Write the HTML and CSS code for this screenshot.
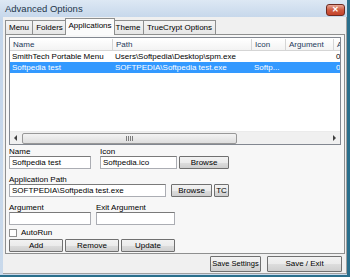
FILE: index.html
```html
<!DOCTYPE html>
<html lang="en">
<head>
    <meta charset="UTF-8">
    <title>Advanced Options</title>
    <link rel="stylesheet" href="styles.css">
</head>
<body>
    <div class="window">
        <!-- Title bar -->
        <div class="titlebar">
            <span class="title">Advanced Options</span>
            <span class="close">✕</span>
        </div>

        <div class="client">
            <!-- Tabs -->
            <div class="tabs">
                <span class="tab tab-menu">Menu</span>
                <span class="tab tab-folders">Folders</span>
                <span class="tab tab-apps active">Applications</span>
                <span class="tab tab-theme">Theme</span>
                <span class="tab tab-tc">TrueCrypt Options</span>
            </div>

            <div class="panel">
                <!-- Applications list -->
                <div class="list">
                    <div class="list-head">
                        <span>Name</span>
                        <span>Path</span>
                        <span>Icon</span>
                        <span>Argument</span>
                        <span>A</span>
                    </div>
                    <div class="list-row">
                        <span>SmithTech Portable Menu</span>
                        <span>Users\Softpedia\Desktop\spm.exe</span>
                        <span></span>
                        <span></span>
                        <span>0</span>
                    </div>
                    <div class="list-row selected">
                        <span>Softpedia test</span>
                        <span>SOFTPEDIA\Softpedia test.exe</span>
                        <span>Softp...</span>
                        <span></span>
                        <span>0</span>
                    </div>
                    <div class="list-fill"></div>
                    <div class="hscroll">
                        <span class="arrow left"></span>
                        <span class="track"><span class="thumb"><span class="grip"></span></span></span>
                        <span class="arrow right"></span>
                    </div>
                </div>

                <!-- Edit form -->
                <div class="form">
                    <div class="form-row">
                        <div class="field w-name">
                            <label>Name</label>
                            <div class="input">Softpedia test</div>
                        </div>
                        <div class="field w-icon">
                            <label>Icon</label>
                            <div class="input">Softpedia.ico</div>
                        </div>
                        <button class="btn btn-browse1">Browse</button>
                    </div>
                    <div class="form-row">
                        <div class="field w-path">
                            <label>Application Path</label>
                            <div class="input">SOFTPEDIA\Softpedia test.exe</div>
                        </div>
                        <button class="btn btn-browse2">Browse</button>
                        <button class="btn btn-tc">TC</button>
                    </div>
                    <div class="form-row">
                        <div class="field w-name">
                            <label>Argument</label>
                            <div class="input"></div>
                        </div>
                        <div class="field w-exit">
                            <label>Exit Argument</label>
                            <div class="input"></div>
                        </div>
                    </div>
                    <div class="check-row">
                        <span class="checkbox"></span>
                        <span>AutoRun</span>
                    </div>
                    <div class="action-row">
                        <button class="btn btn-action">Add</button>
                        <button class="btn btn-action">Remove</button>
                        <button class="btn btn-action">Update</button>
                    </div>
                </div>
            </div>

            <!-- Footer buttons -->
            <div class="footer">
                <button class="btn btn-save">Save Settings</button>
                <button class="btn btn-exit">Save / Exit</button>
            </div>
        </div>
    </div>
</body>
</html>
```

FILE: styles.css
```css
/* Base */
* {
    margin: 0;
    padding: 0;
    box-sizing: border-box;
    font-family: 'Liberation Sans', Arial, sans-serif;
}

body {
    width: 350px;
    height: 277px;
    overflow: hidden;
    background-color: #c9d8ea;
    font-size: 8px;
    color: #000;
}

/* Window frame */
.window {
    width: 350px;
    height: 277px;
    display: flex;
    flex-direction: column;
    background: linear-gradient(#dde8f4, #c3d5ea 20px, #c9d9eb);
    border-right: 3px solid #2a6f8c;
    border-bottom: 2px solid #2a6f8c;
}

.titlebar {
    height: 17px;
    display: flex;
    align-items: center;
    justify-content: space-between;
    padding: 0 2px 0 5px;
}

.title {
    font-size: 9.5px;
    color: #24364a;
}

.close {
    width: 19px;
    height: 12px;
    margin-top: 3px;
    border: 1px solid #6d2a20;
    border-radius: 3px;
    background: linear-gradient(#e7a898, #cf5a40 50%, #c4422a);
    color: white;
    font-size: 8px;
    font-weight: bold;
    line-height: 10px;
    text-align: center;
}

.client {
    flex: 1;
    margin: 0 0 1px 3px;
    background-color: #f0f0f0;
    border-right: 1px solid #a0a0a0;
    border-bottom: 1px solid #a0a0a0;
    padding: 1px 0 0 2px;
    display: flex;
    flex-direction: column;
}

/* Tabs */
.tabs {
    display: flex;
    height: 16px;
    align-items: flex-end;
    position: relative;
    z-index: 1;
}

.tab {
    height: 14px;
    line-height: 13px;
    text-align: center;
    border: 1px solid #8e8f8f;
    border-bottom: none;
    border-left: none;
    background: linear-gradient(#f4f4f4, #e6e6e6);
    color: #000;
}

.tab-menu { width: 28px; border-left: 1px solid #8e8f8f; }
.tab-folders { width: 34px; }
.tab-apps { width: 46px; }
.tab-theme { width: 31px; }
.tab-tc { width: 72px; }

.tab.active {
    height: 17px;
    margin-left: -2px;
    margin-right: -2px;
    width: 50px;
    border-left: 1px solid #8e8f8f;
    background: #fbfbfb;
    line-height: 14px;
    margin-bottom: -1px;
    position: relative;
}

.panel {
    width: 340px;
    border: 1px solid #8e8f8f;
    background-color: #f7f7f7;
    padding: 2px 3px 1px 3px;
}

/* List view */
.list {
    height: 108px;
    border: 1px solid #828790;
    background-color: white;
    display: flex;
    flex-direction: column;
    overflow: hidden;
}

.list-head,
.list-row {
    display: grid;
    grid-template-columns: 103px 139px 34px 48px 20px;
}

.list-head {
    height: 12px;
    margin-top: 1px;
    line-height: 11px;
    color: #1e395b;
}

.list-head span {
    padding-left: 3px;
    border-right: 1px solid #d5d5d5;
    border-bottom: 1px solid #d5d5d5;
    background: linear-gradient(#ffffff, #f3f3f3);
}

.list-row {
    height: 11px;
    line-height: 11px;
}

.list-row span {
    padding-left: 2px;
    white-space: nowrap;
    overflow: hidden;
}

.list-row.selected {
    background-color: #3399ff;
    color: white;
}

.list-fill {
    flex: 1;
}

.hscroll {
    height: 13px;
    display: flex;
    align-items: center;
    background-color: #f0f0f0;
    border-top: 1px solid #ebebeb;
}

.arrow {
    width: 12px;
    height: 12px;
    position: relative;
}

.arrow::after {
    content: '';
    position: absolute;
    top: 3px;
    border-top: 3px solid transparent;
    border-bottom: 3px solid transparent;
}

.arrow.left::after {
    left: 4px;
    border-right: 3px solid #404040;
}

.arrow.right::after {
    left: 5px;
    border-left: 3px solid #404040;
}

.track {
    flex: 1;
    height: 12px;
    display: flex;
    align-items: center;
}

.thumb {
    width: 215px;
    height: 11px;
    border: 1px solid #989898;
    border-radius: 2px;
    background: linear-gradient(#f3f3f3, #dedede);
    display: flex;
    align-items: center;
    justify-content: center;
}

.grip {
    width: 7px;
    height: 5px;
    background: repeating-linear-gradient(90deg, #7b7b7b 0 1px, transparent 1px 2px);
}

/* Form */
.form {
    display: flex;
    flex-direction: column;
}

.form-row {
    display: flex;
    align-items: flex-end;
}

.field label {
    display: block;
    height: 9px;
    line-height: 9px;
    margin-top: 2px;
    color: #000;
}

.form-row:nth-child(2) .field label,
.form-row:nth-child(3) .field label {
    margin-top: 6px;
}

.input {
    height: 13px;
    border: 1px solid #abadb3;
    border-top-color: #7a7a7a;
    background-color: white;
    padding-left: 2px;
    line-height: 11px;
    white-space: nowrap;
    overflow: hidden;
}

.w-name { width: 82px; }
.w-icon { width: 77px; margin-left: 9px; }
.w-path { width: 157px; }
.w-exit { width: 79px; margin-left: 5px; }

.btn {
    height: 13px;
    padding: 0;
    border: 1px solid #707070;
    border-radius: 1px;
    background: linear-gradient(#f2f2f2, #ebebeb 50%, #dddddd 51%, #cfcfcf);
    font-size: 8px;
    color: #000;
    line-height: 11px;
    white-space: nowrap;
}

.btn-browse1 { width: 50px; margin-left: 2px; }
.btn-browse2 { width: 41px; margin-left: 5px; }
.btn-tc { width: 15px; margin-left: 2px; }

.check-row {
    display: flex;
    align-items: center;
    gap: 4px;
    margin-top: 3px;
    height: 9px;
}

.checkbox {
    width: 8px;
    height: 8px;
    border: 1px solid #8f8f8f;
    background-color: white;
}

.action-row {
    display: flex;
    gap: 2px;
    margin-top: 2px;
}

.btn-action { width: 54px; }

/* Footer */
.footer {
    display: flex;
    justify-content: flex-end;
    gap: 6px;
    padding: 2px 4px 0 0;
}

.btn-save { width: 51px; height: 16px; line-height: 14px; font-size: 7.5px; }
.btn-exit { width: 75px; height: 16px; line-height: 14px; }
```
